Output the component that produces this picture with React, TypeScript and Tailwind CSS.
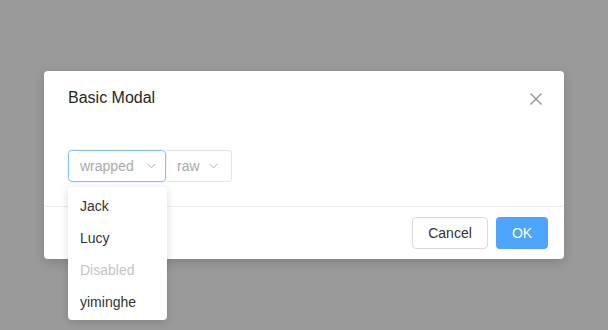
import { useState } from "react";

function Chevron() {
  return (
    <svg width="9" height="6" viewBox="0 0 9 6" className="shrink-0">
      <polyline points="0.5,0.8 4.5,4.8 8.5,0.8" fill="none" stroke="#b3b3b3" strokeWidth="1" />
    </svg>
  );
}

export default function App() {
  const [open] = useState(true);
  const options = [
    { label: "Jack", disabled: false },
    { label: "Lucy", disabled: false },
    { label: "Disabled", disabled: true },
    { label: "yiminghe", disabled: false },
  ];

  return (
    <div
      className="w-[608px] h-[330px] overflow-hidden bg-[#9a9a9a] flex justify-center pt-[71px]"
      style={{ fontFamily: '"Liberation Sans", Arial, sans-serif' }}
    >
      <div className="w-[520px] h-[188px] bg-white rounded-[4px] shadow-[0_4px_12px_rgba(0,0,0,0.15)] flex flex-col">
        {/* header */}
        <div className="relative h-[55px] px-6 pt-4 border-b border-white">
          <h2 className="text-[16px] leading-[22px] text-[#262626]">Basic Modal</h2>
          <button className="absolute right-0 top-0 w-14 h-14 flex items-center justify-center">
            <svg width="12" height="12" viewBox="0 0 12 12">
              <path d="M0.5 0.5 L11.5 11.5 M11.5 0.5 L0.5 11.5" stroke="#8c8c8c" strokeWidth="1.2" fill="none" />
            </svg>
          </button>
        </div>

        {/* body */}
        <div className="p-6 h-[80px]">
          <div className="flex">
            <div className="relative">
              <div className="w-[98px] h-8 border border-[#86c3f5] rounded-[4px] shadow-[0_0_0_1px_rgba(24,144,255,0.08)] flex items-center justify-between pl-[11px] pr-[9px] text-[14px] text-[#a9a9a9]">
                <span>wrapped</span>
                <Chevron />
              </div>
              {open && (
                <ul className="absolute left-0 top-[37px] w-[99px] bg-white rounded-[4px] shadow-[0_2px_8px_rgba(0,0,0,0.15)] pt-[3px] pb-[2px] z-10">
                  {options.map((o) => (
                    <li
                      key={o.label}
                      className={
                        o.disabled
                          ? "h-8 flex items-center px-3 text-[14px] text-[#c4c4c4]"
                          : "h-8 flex items-center px-3 text-[14px] text-[#333333]"
                      }
                    >
                      {o.label}
                    </li>
                  ))}
                </ul>
              )}
            </div>
            <div className="w-[66px] h-8 border border-l-0 border-[#e3e3e3] rounded-r-[4px] flex items-center justify-between pl-[11px] pr-[13px] text-[14px] text-[#a9a9a9]">
              <span>raw</span>
              <Chevron />
            </div>
          </div>
        </div>

        {/* footer */}
        <div className="border-t border-[#ebebeb] px-4 py-[10px] flex justify-end gap-2">
          <button className="w-[76px] h-8 rounded-[4px] border border-[#d9d9d9] bg-white text-[14px] text-[#333333]">
            Cancel
          </button>
          <button className="w-[52px] h-8 rounded-[4px] bg-[#4da6fc] text-[14px] text-white">
            OK
          </button>
        </div>
      </div>
    </div>
  );
}
